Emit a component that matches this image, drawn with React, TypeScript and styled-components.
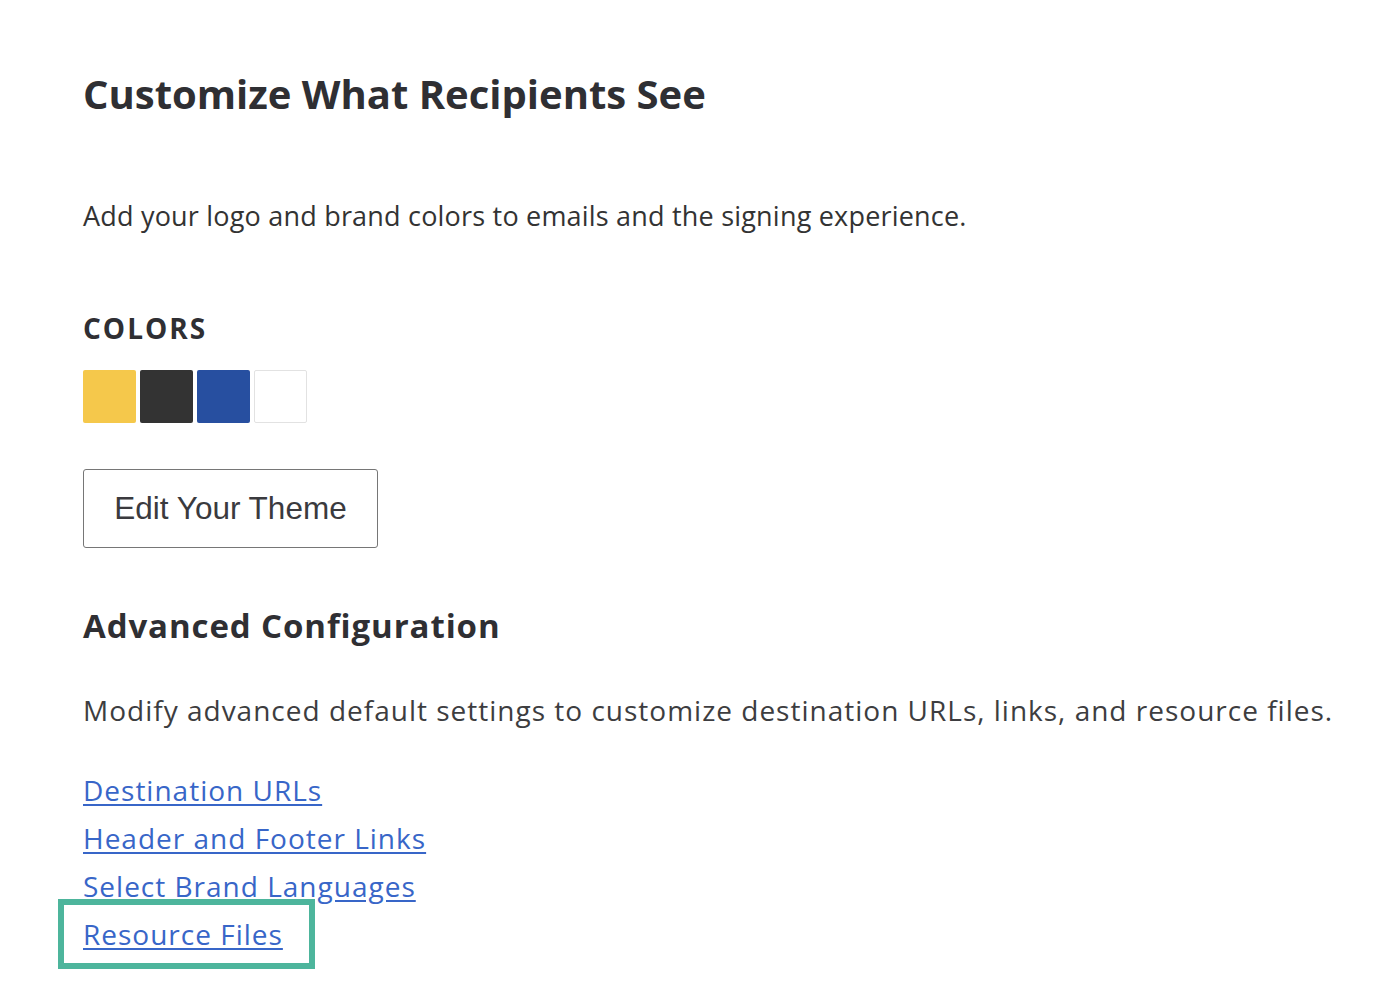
import React from "react";
import styled, { createGlobalStyle } from "styled-components";

const GlobalStyle = createGlobalStyle`
  html, body {
    margin: 0;
    padding: 0;
    background: #fff;
  }
  body {
    font-family: "Open Sans", "Noto Sans", sans-serif;
    color: #333;
  }
`;

const Page = styled.main`
  padding: 62px 0 60px 83px;
  display: flex;
  flex-direction: column;
  align-items: flex-start;
`;

const Title = styled.h1`
  margin: 0;
  font-size: 40px;
  font-weight: 700;
  line-height: 64px;
  color: #2f2f33;
`;

const Lead = styled.p`
  margin: 70px 0 0;
  font-size: 27px;
  letter-spacing: 0.2px;
  line-height: 40px;
  color: #333;
`;

const Label = styled.h3`
  margin: 74px 0 0;
  font-size: 28px;
  letter-spacing: 2px;
  font-weight: 700;
  line-height: 36px;
  color: #2f2f33;
`;

const Swatches = styled.div`
  display: flex;
  gap: 4px;
  margin-top: 24px;
`;

const Swatch = styled.span<{ $color: string; $bordered?: boolean }>`
  width: 53px;
  height: 53px;
  box-sizing: border-box;
  border-radius: 2px;
  background: ${(p) => p.$color};
  border: ${(p) => (p.$bordered ? "1px solid #e2e2e2" : "none")};
`;

const ThemeButton = styled.button`
  margin-top: 46px;
  width: 295px;
  height: 79px;
  background: #fff;
  border: 1.5px solid #767676;
  border-radius: 3px;
  font-family: "Liberation Sans", Arial, sans-serif;
  font-size: 31.5px;
  color: #3a3a3e;
  cursor: pointer;
`;

const SectionTitle = styled.h2`
  margin: 56px 0 0;
  font-size: 33px;
  letter-spacing: 0.9px;
  font-weight: 700;
  line-height: 44px;
  color: #2f2f33;
`;

const Body = styled.p`
  margin: 42px 0 0;
  font-size: 28px;
  letter-spacing: 1px;
  line-height: 40px;
  color: #3d3d40;
`;

const LinkList = styled.ul`
  list-style: none;
  margin: 36px 0 0;
  padding: 0;
  display: flex;
  flex-direction: column;
  align-items: flex-start;
`;

const LinkItem = styled.li<{ $highlight?: boolean }>`
  position: relative;
  font-size: 28px;
  letter-spacing: 1px;
  line-height: 48px;
  ${(p) =>
    p.$highlight &&
    `
    &::after {
      content: "";
      position: absolute;
      left: -25px;
      right: -32px;
      top: -11px;
      bottom: -11px;
      border: 6px solid #4db59c;
    }
  `}
`;

const Link = styled.a`
  color: #3866c8;
  text-decoration: underline;
  text-underline-offset: 3px;
`;

const colors = [
  { color: "#f5c84b" },
  { color: "#333333" },
  { color: "#274fa0" },
  { color: "#ffffff", bordered: true },
];

const links = [
  "Destination URLs",
  "Header and Footer Links",
  "Select Brand Languages",
  "Resource Files",
];

export default function App() {
  return (
    <>
      <GlobalStyle />
      <Page>
        <Title>Customize What Recipients See</Title>
        <Lead>Add your logo and brand colors to emails and the signing experience.</Lead>
        <Label>COLORS</Label>
        <Swatches>
          {colors.map((c) => (
            <Swatch key={c.color} $color={c.color} $bordered={c.bordered} />
          ))}
        </Swatches>
        <ThemeButton>Edit Your Theme</ThemeButton>
        <SectionTitle>Advanced Configuration</SectionTitle>
        <Body>
          Modify advanced default settings to customize destination URLs, links, and resource files.
        </Body>
        <LinkList>
          {links.map((l) => (
            <LinkItem key={l} $highlight={l === "Resource Files"}>
              <Link href="#">{l}</Link>
            </LinkItem>
          ))}
        </LinkList>
      </Page>
    </>
  );
}
